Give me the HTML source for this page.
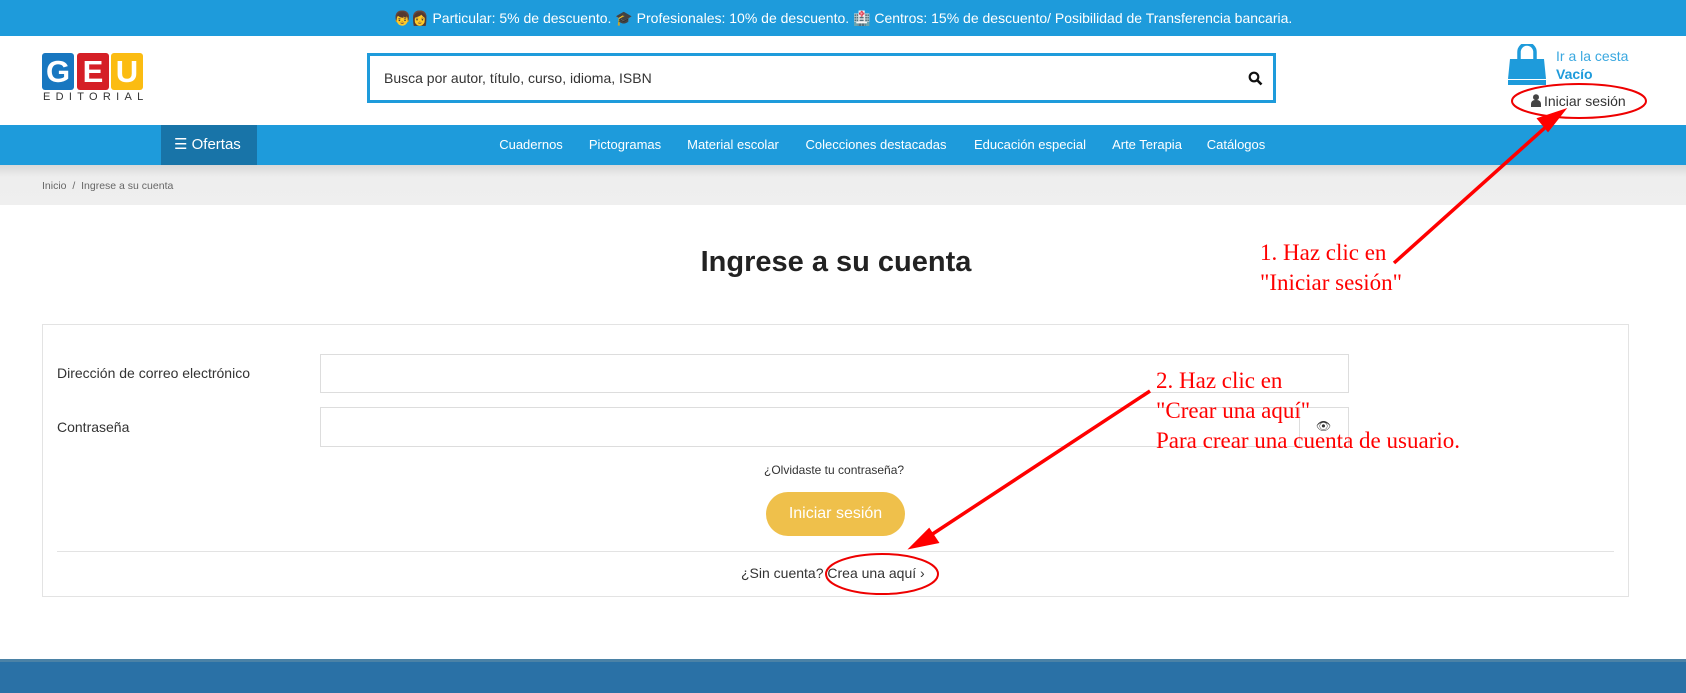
<!DOCTYPE html>
<html><head><meta charset="utf-8"><style>
*{margin:0;padding:0;box-sizing:border-box}
body{width:1686px;height:693px;position:relative;overflow:hidden;background:#fff;font-family:"Liberation Sans","Noto Sans CJK JP",sans-serif;color:#333}
.a{position:absolute}
.top{left:0;top:0;width:1686px;height:36px;background:#1e9bdb;color:#fff;font-size:14px;text-align:center;line-height:36px}
.nav{left:0;top:125px;width:1686px;height:40px;background:#1e9bdb}
.nav span{position:absolute;top:0;line-height:40px;color:#fff;font-size:13px;transform:translateX(-50%);white-space:nowrap}
.bc{left:0;top:165px;width:1686px;height:40px;background:linear-gradient(#d8d8d8,#eeeeee 30%,#efefef)}
.inp{border:1px solid #ddd;background:#fff}
.red{color:#f00;font-family:"Liberation Serif",serif;font-size:23px;line-height:30px;white-space:nowrap}
</style></head><body>
<div class="a top">👦👩 Particular: 5% de descuento. 🎓 Profesionales: 10% de descuento. 🏥 Centros: 15% de descuento/ Posibilidad de Transferencia bancaria.</div>
<div class="a" style="left:42px;top:53px;width:32px;height:37px;background:#1877c0;border-radius:3px;color:#fff;font:bold 31px/37px 'Liberation Sans',sans-serif;text-align:center">G</div>
<div class="a" style="left:77px;top:53px;width:32px;height:37px;background:#d51f26;border-radius:3px;color:#fff;font:bold 31px/37px 'Liberation Sans',sans-serif;text-align:center">E</div>
<div class="a" style="left:111px;top:53px;width:32px;height:37px;background:#fbbc12;border-radius:3px;color:#fff;font:bold 31px/37px 'Liberation Sans',sans-serif;text-align:center">U</div>
<div class="a" style="left:43px;top:91px;font-size:11px;letter-spacing:5.3px;color:#333">EDITORIAL</div>
<div class="a" style="left:367px;top:53px;width:909px;height:50px;border:3px solid #1e9bdb;background:#fff"></div>
<div class="a" style="left:384px;top:70px;font-size:14px;color:#333">Busca por autor, título, curso, idioma, ISBN</div>
<svg class="a" style="left:1248px;top:71px" width="15" height="15" viewBox="0 0 15 15"><circle cx="6" cy="6" r="4.3" fill="none" stroke="#111" stroke-width="2.2"/><path d="M9 9l4.5 4.5" stroke="#111" stroke-width="2.6"/></svg>
<svg class="a" style="left:1507px;top:44px" width="40" height="42" viewBox="0 0 40 42"><path d="M12 16V8a8 8 0 0 1 16 0v8" fill="none" stroke="#1e9bdb" stroke-width="3.5"/><path d="M3 15h34l2 20H1z" fill="#1e9bdb"/><rect x="1" y="36" width="38" height="5" fill="#1e9bdb"/></svg>
<div class="a" style="left:1556px;top:48px;font-size:14px;color:#3aa8e0">Ir a la cesta</div>
<div class="a" style="left:1556px;top:66px;font-size:14px;color:#1e9bdb;font-weight:bold">Vacío</div>
<svg class="a" style="left:1531px;top:94px" width="10" height="13" viewBox="0 0 10 13"><circle cx="5" cy="3.3" r="3" fill="#444"/><path d="M0 13v-3a4 4 0 0 1 4-4h2a4 4 0 0 1 4 4v3z" fill="#444"/></svg>
<div class="a" style="left:1544px;top:93px;font-size:14px;color:#333">Iniciar sesión</div>
<div class="a nav">
<div style="position:absolute;left:161px;top:0;width:96px;height:40px;background:#1874a8;color:#fff;font-size:15px;line-height:40px;padding-left:13px">☰ Ofertas</div>
<span style="left:531px">Cuadernos</span><span style="left:625px">Pictogramas</span><span style="left:733px">Material escolar</span><span style="left:876px">Colecciones destacadas</span><span style="left:1030px">Educación especial</span><span style="left:1147px">Arte Terapia</span><span style="left:1236px">Catálogos</span>
</div>
<div class="a bc"><div style="position:absolute;left:42px;top:15px;font-size:10.5px;color:#666">Inicio &nbsp;/&nbsp; Ingrese a su cuenta</div></div>
<div class="a" style="left:0;top:246px;width:1672px;text-align:center;font-size:29px;font-weight:bold;color:#222">Ingrese a su cuenta</div>
<div class="a" style="left:42px;top:324px;width:1587px;height:273px;border:1px solid #e3e3e3"></div>
<div class="a" style="left:57px;top:365px;font-size:14px">Dirección de correo electrónico</div>
<div class="a inp" style="left:320px;top:354px;width:1029px;height:39px"></div>
<div class="a" style="left:57px;top:419px;font-size:14px">Contraseña</div>
<div class="a inp" style="left:320px;top:407px;width:1029px;height:40px"></div>
<div class="a inp" style="left:1299px;top:407px;width:50px;height:40px"></div>
<div class="a" style="left:1316px;top:419px;font-size:12px">👁</div>
<div class="a" style="left:764px;top:463px;font-size:12px;color:#333">¿Olvidaste tu contraseña?</div>
<div class="a" style="left:766px;top:492px;width:139px;height:44px;border-radius:22px;background:#efc04b;color:#fff;font-size:16px;line-height:44px;text-align:center">Iniciar sesión</div>
<div class="a" style="left:57px;top:551px;width:1557px;height:1px;background:#e3e3e3"></div>
<div class="a" style="left:741px;top:565px;font-size:14px;color:#333">¿Sin cuenta? Crea una aquí ›</div>
<div class="a" style="left:0;top:659px;width:1686px;height:34px;background:#2a71a6;border-top:3px solid #4b82a6"></div>
<div class="a red" style="left:1260px;top:238px">1. Haz clic en<br>"Iniciar sesión"</div>
<div class="a red" style="left:1156px;top:366px">2. Haz clic en<br>"Crear una aquí"<br>Para crear una cuenta de usuario.</div>
<svg class="a" style="left:0;top:0" width="1686" height="693">
<ellipse cx="1579" cy="101" rx="67" ry="17" fill="none" stroke="#e00" stroke-width="2"/>
<ellipse cx="882" cy="574" rx="56" ry="20" fill="none" stroke="#e00" stroke-width="2"/>
<path d="M1394 263L1548 125" stroke="#f00" stroke-width="3.5"/><path d="M1563 111l-24 8 9 11z" fill="#f00" stroke="#f00" stroke-width="3"/>
<path d="M1150 391L928 537" stroke="#f00" stroke-width="3.5"/><path d="M912 547l25-5-8-12z" fill="#f00" stroke="#f00" stroke-width="3"/>
</svg>
</body></html>
